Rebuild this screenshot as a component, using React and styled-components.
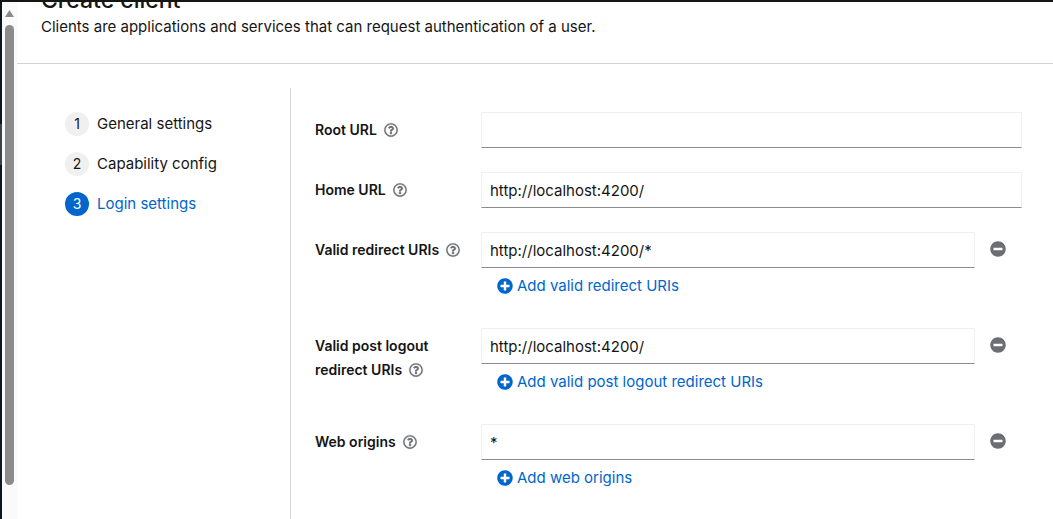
import React, { useId } from "react";
import styled, { createGlobalStyle } from "styled-components";
import { FaMinusCircle, FaPlusCircle, FaRegQuestionCircle } from "react-icons/fa";

const GlobalStyle = createGlobalStyle`
  *, *::before, *::after { box-sizing: border-box; }
  body {
    margin: 0;
    background: #fff;
    color: #151515;
    font: 400 15px/24px Inter, "Liberation Sans", sans-serif;
  }
  button, input { font: inherit; color: inherit; }
`;

const Window = styled.div`
  display: flex;
  height: 100vh;
  overflow: hidden;
  border-top: 2px solid #151515;
`;

const Backdrop = styled.div`
  flex: 0 0 2px;
  background: linear-gradient(#0f161b 0 122px, #3d4347 122px 163px, #0f161b 163px);
`;

const ScrollTrack = styled.div`
  flex: 0 0 15px;
  display: flex;
  flex-direction: column;
  align-items: center;
  padding: 8px 0 34px;
  background: #fafafa;
`;

const ScrollArrow = styled.svg`
  flex: none;
  width: 9px;
  height: 7px;
  fill: #8b8b8b;
`;

const ScrollThumb = styled.div`
  flex: 1;
  width: 9px;
  margin-top: 8px;
  border-radius: 5px;
  background: #8b8b8b;
`;

const Page = styled.main`
  flex: 1;
  min-width: 0;
  display: flex;
  flex-direction: column;
`;

const PageHeader = styled.header`
  flex: none;
  display: flex;
  flex-direction: column;
  justify-content: flex-end;
  height: 62px;
  padding: 0 24px 24px;
  overflow: hidden;
  border-bottom: 1px solid #d2d2d2;
`;

const Title = styled.h1`
  margin: 0;
  font-size: 23px;
  font-weight: 500;
  line-height: 30px;
`;

const Description = styled.p`
  margin: 0;
`;

const Wizard = styled.div`
  flex: 1;
  display: flex;
  padding-top: 24px;
`;

const Steps = styled.nav`
  flex: 0 0 274px;
  padding: 24px 24px 24px 48px;
  border-right: 1px solid #d2d2d2;
`;

const StepList = styled.ol`
  display: flex;
  flex-direction: column;
  gap: 16px;
  margin: 0;
  padding: 0;
  list-style: none;
`;

const StepButton = styled.button`
  display: flex;
  align-items: center;
  gap: 8px;
  padding: 0;
  border: 0;
  background: none;
  color: ${(p) => (p.$current ? "#0066cc" : "#151515")};
  cursor: pointer;
`;

const StepNumber = styled.span`
  width: 24px;
  height: 24px;
  border-radius: 50%;
  background: ${(p) => (p.$current ? "#0066cc" : "#f0f0f0")};
  color: ${(p) => (p.$current ? "#fff" : "#151515")};
  font-size: 14px;
  text-align: center;
`;

const Form = styled.form`
  flex: 1;
  min-width: 0;
  display: flex;
  flex-direction: column;
  gap: 24px;
  padding: 24px 31px 24px 24px;
`;

const FormRow = styled.div`
  display: grid;
  grid-template-columns: 150px minmax(0, 1fr);
  column-gap: 16px;
`;

const LabelCell = styled.div`
  padding-top: 6px;
`;

const Label = styled.label`
  font-size: 14px;
  font-weight: 600;
`;

const HelpButton = styled.button`
  margin-left: 3px;
  padding: 0;
  border: 0;
  background: none;
  color: #6a6e73;
  font-size: 14px;
  line-height: 14px;
  vertical-align: -2px;
  cursor: help;

  svg {
    display: block;
    overflow: visible;
    stroke-width: 8;
  }
`;

const InputLine = styled.div`
  display: flex;
`;

const TextInput = styled.input`
  flex: 1;
  min-width: 0;
  height: 36px;
  padding: 0 8px;
  border: 1px solid #f0f0f0;
  border-bottom-color: #8a8d90;
  border-radius: 0;
  background: #fff;
  outline: none;
`;

const RemoveButton = styled.button`
  flex: 0 0 47px;
  display: flex;
  align-items: center;
  padding: 0 15px 2px;
  border: 0;
  background: none;
  color: #6a6e73;
  font-size: 16px;
  cursor: pointer;
`;

const AddButton = styled.button`
  display: flex;
  align-items: center;
  gap: 4px;
  height: 36px;
  padding: 0 16px;
  border: 0;
  background: none;
  color: #0066cc;
  cursor: pointer;

  svg { font-size: 16px; }
`;

const steps = ["General settings", "Capability config", "Login settings"];

const fields = [
  { label: "Root URL", value: "" },
  { label: "Home URL", value: "http://localhost:4200/" },
  { label: "Valid redirect URIs", value: "http://localhost:4200/*", add: "Add valid redirect URIs" },
  {
    label: "Valid post logout redirect URIs",
    value: "http://localhost:4200/",
    add: "Add valid post logout redirect URIs",
  },
  { label: "Web origins", value: "*", add: "Add web origins" },
];

function Field({ label, value, add }) {
  const id = useId();
  return (
    <FormRow>
      <LabelCell>
        <Label htmlFor={id}>{label}</Label>
        {" "}
        <HelpButton type="button" aria-label={`Help for ${label}`}>
          <FaRegQuestionCircle />
        </HelpButton>
      </LabelCell>
      <div>
        <InputLine>
          <TextInput id={id} type="text" defaultValue={value} />
          {add && (
            <RemoveButton type="button" aria-label={`Remove ${label}`}>
              <FaMinusCircle />
            </RemoveButton>
          )}
        </InputLine>
        {add && (
          <AddButton type="button">
            <FaPlusCircle />
            {add}
          </AddButton>
        )}
      </div>
    </FormRow>
  );
}

export default function App() {
  return (
    <>
      <GlobalStyle />
      <Window>
        <Backdrop />
        <ScrollTrack aria-hidden="true">
          <ScrollArrow viewBox="0 0 9 7">
            <path d="M4.5 0 9 7H0Z" />
          </ScrollArrow>
          <ScrollThumb />
        </ScrollTrack>
        <Page>
          <PageHeader>
            <Title>Create client</Title>
            <Description>
              Clients are applications and services that can request authentication of a user.
            </Description>
          </PageHeader>
          <Wizard>
            <Steps aria-label="Wizard steps">
              <StepList>
                {steps.map((name, i) => (
                  <li key={name}>
                    <StepButton type="button" $current={i === 2} aria-current={i === 2 ? "step" : undefined}>
                      <StepNumber $current={i === 2}>{i + 1}</StepNumber>
                      {name}
                    </StepButton>
                  </li>
                ))}
              </StepList>
            </Steps>
            <Form>
              {fields.map((field) => (
                <Field key={field.label} {...field} />
              ))}
            </Form>
          </Wizard>
        </Page>
      </Window>
    </>
  );
}
